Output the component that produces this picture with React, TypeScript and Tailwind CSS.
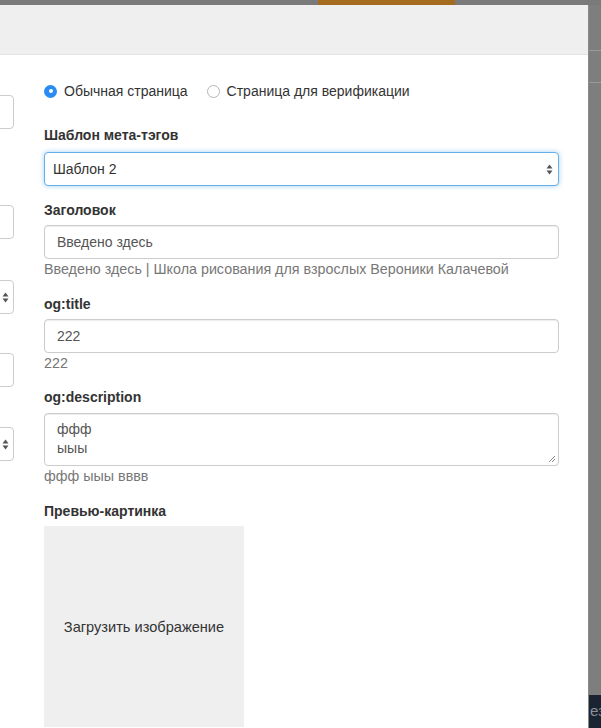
import React from "react";

const font = "font-['Liberation_Sans',Arial,sans-serif]";

function LeftStub(props: { top: string; arrows?: boolean }) {
  return (
    <div
      className={`${props.top} -ml-[186px] flex h-[34px] w-[200px] items-center justify-end rounded-[4px] border border-[#ccc] bg-white pr-[4px]`}
    >
      {props.arrows ? <Arrows /> : null}
    </div>
  );
}

function Arrows() {
  return (
    <svg width="7" height="11" viewBox="0 0 7 11">
      <path d="M3.5 0.5 L6.5 4.5 H0.5 Z" fill="#555" />
      <path d="M3.5 10.5 L6.5 6.5 H0.5 Z" fill="#555" />
    </svg>
  );
}

function Radio(props: { checked?: boolean; label: string }) {
  return (
    <label className="flex items-center">
      {props.checked ? (
        <span className="flex h-[13px] w-[13px] items-center justify-center rounded-full bg-[#2a8cf3]">
          <span className="h-[4px] w-[4px] rounded-full bg-white" />
        </span>
      ) : (
        <span className="h-[13px] w-[13px] rounded-full border border-[#b5b5b5] bg-white" />
      )}
      <span className="ml-[7px] text-[#333]">{props.label}</span>
    </label>
  );
}

function Label(props: { children: React.ReactNode; className?: string }) {
  return (
    <div className={`h-[20px] font-bold leading-[20px] text-[#333] ${props.className ?? ""}`}>
      {props.children}
    </div>
  );
}

function Help(props: { children: React.ReactNode }) {
  return <div className="h-[20px] text-[14.3px] leading-[20px] text-[#777]">{props.children}</div>;
}

function TextInput(props: { value: string; className?: string }) {
  return (
    <div
      className={`flex h-[34px] items-center rounded-[4px] border border-[#ccc] bg-white pl-[12px] text-[#555] shadow-[inset_0_1px_1px_rgba(0,0,0,0.075)] ${props.className ?? ""}`}
    >
      {props.value}
    </div>
  );
}

export default function App() {
  return (
    <div className={`${font} relative flex h-[728px] w-[601px] flex-col overflow-hidden bg-[#7c7c7c] text-[14px] leading-[20px]`}>
      {/* page behind the modal, top strip */}
      <div className="flex h-[5px] shrink-0">
        <div className="w-[318px] bg-[#7a7a7a]" />
        <div className="w-[137px] bg-[#a56c1f]" />
        <div className="flex-1 bg-[#7a7a7a]" />
      </div>
      <div className="flex flex-1">
        {/* modal */}
        <div className="flex w-[589px] shrink-0 flex-col border-r border-[#8a8a8a] bg-white">
          <div className="h-[50px] shrink-0 border-b border-[#e3e3e3] bg-[#efefef]" />
          <div className="flex">
            {/* left column, cut off */}
            <div className="flex w-[14px] shrink-0 flex-col">
              <LeftStub top="mt-[40px]" />
              <LeftStub top="mt-[76px]" />
              <LeftStub top="mt-[41px]" arrows />
              <LeftStub top="mt-[39px]" />
              <LeftStub top="mt-[40px]" arrows />
            </div>
            {/* right column */}
            <div className="ml-[30px] flex w-[515px] flex-col">
              <div className="mt-[26px] flex h-[20px] items-center gap-[19px]">
                <Radio checked label="Обычная страница" />
                <Radio label="Страница для верификации" />
              </div>

              <Label className="mt-[24px]">Шаблон мета-тэгов</Label>
              <div className="mt-[7px] flex h-[34px] items-center justify-between rounded-[4px] border border-[#66afe9] bg-white pl-[8px] pr-[5px] text-[#333] shadow-[0_0_5px_rgba(102,175,233,0.6)]">
                <span>Шаблон 2</span>
                <Arrows />
              </div>

              <Label className="mt-[14px]">Заголовок</Label>
              <TextInput className="mt-[5px]" value="Введено здесь" />
              <Help>Введено здесь | Школа рисования для взрослых Вероники Калачевой</Help>

              <Label className="mt-[15px]">og:title</Label>
              <TextInput className="mt-[5px]" value="222" />
              <Help>222</Help>

              <Label className="mt-[14px]">og:description</Label>
              <div className="relative mt-[6px] h-[53px] rounded-[4px] border border-[#ccc] bg-white pl-[12px] pt-[6px] text-[#555] shadow-[inset_0_1px_1px_rgba(0,0,0,0.075)]">
                <div className="h-[19px] leading-[19px]">ффф</div>
                <div className="h-[19px] leading-[19px]">ыыы</div>
                <svg className="absolute bottom-[2px] right-[2px]" width="8" height="8" viewBox="0 0 8 8">
                  <path d="M1 7 L7 1 M4 7 L7 4" stroke="#888" strokeWidth="1" />
                </svg>
              </div>
              <Help>ффф ыыы вввв</Help>

              <Label className="mt-[15px]">Превью-картинка</Label>
              <div className="mt-[5px] flex h-[201px] w-[200px] items-center justify-center bg-[#efefef] text-[14.6px] text-[#333]">
                Загрузить изображение
              </div>
            </div>
          </div>
        </div>
        {/* page behind, right strip */}
        <div className="flex flex-1 flex-col bg-[#7e7e7e]">
          <div className="mt-[45px] h-px bg-[#9a9a9a]" />
          <div className="mt-[31px] h-px bg-[#9a9a9a]" />
          <div className="flex-1" />
          <div className="h-[33px] overflow-hidden whitespace-nowrap bg-[#1b2431] pl-[1px] pt-[6px] text-[15px] text-[#8a9099]">ез</div>
        </div>
      </div>
    </div>
  );
}
